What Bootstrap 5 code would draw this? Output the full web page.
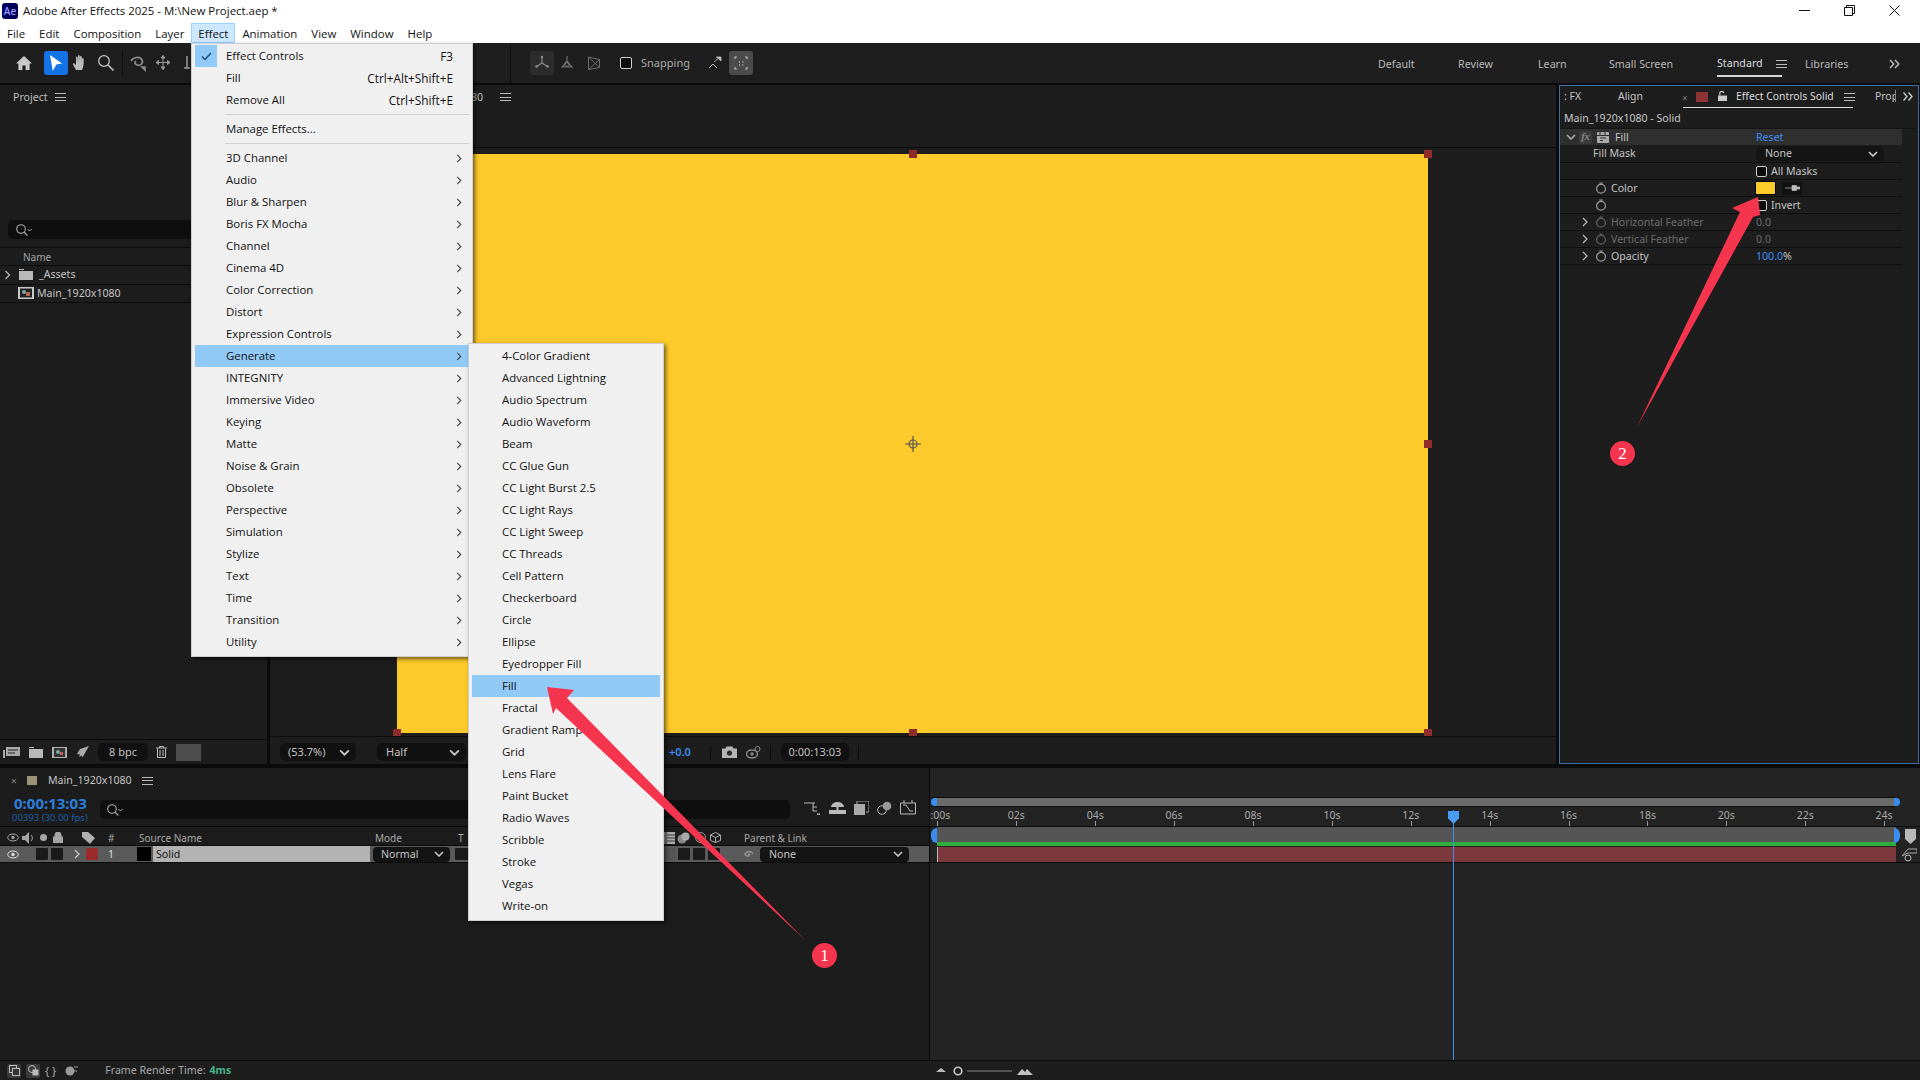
<!DOCTYPE html>
<html lang="en">
<head>
<meta charset="utf-8">
<title>Adobe After Effects 2025</title>
<link href="https://cdn.jsdelivr.net/npm/bootstrap@5.3.0/dist/css/bootstrap.min.css" rel="stylesheet">
<style>
html,body{margin:0;height:100%;overflow:hidden;background:#0b0b0b}
body{font-family:"Noto Sans","Liberation Sans",sans-serif;font-size:10.6px;color:#c4c4c4;line-height:1.2}
.app{width:1920px;height:1080px;position:relative;overflow:hidden}
svg{display:block;flex:none}
.win{font-family:"Open Sans","Liberation Sans",sans-serif;font-size:11.45px;color:#111}
.titlebar{height:43px;background:#fff}
.title-row{height:22px;padding-left:2px;gap:5px}
.ae{width:16px;height:16px;background:#00005b;border-radius:3px;color:#9999ff;font-size:10px;font-weight:600;text-align:center;line-height:16px}
.win-ctl{margin-left:auto;gap:34px;padding-right:20px;margin-top:-2px}
.menu-row{height:21px;padding-left:0}
.menu-row span{padding:0 6px;height:20px;line-height:19px;border:1px solid transparent}
.menu-row .m-open{background:#cce8ff;border-color:#99d1ff}
.toolbar{height:40px;background:#1e1e1e;padding-left:12px}
.tool{width:24px;height:24px;border-radius:3px;display:flex;align-items:center;justify-content:center;color:#bdbdbd;flex:none}
.tool.blue{background:#1473e6;color:#fff;margin-left:8px}
.tool.on{background:#2c2c2c}
.tool.on2{background:#4b4b4b}
.tool.dim{color:#777}
.ws{font-size:10.7px;color:#b9b9b9}
.main{height:679px;margin-top:2px}
.panel{background:#1d1d1d;min-width:0}
.p-project{width:267px}
.p-comp{width:1286px;margin:0 3px}
.p-right{width:360px;margin-left:0;border:1px solid #3f6f9f}
.p-head{height:24px;padding-left:13px;color:#bdbdbd;gap:7px}
.burger{width:11px;height:8px;border-top:1px solid #bbb;border-bottom:1px solid #bbb;position:relative;flex:none}
.burger::after{content:"";position:absolute;left:0;right:0;top:2.5px;height:1px;background:#bbb}
.search{height:19px;background:#0e0e0e;border-radius:5px;padding-left:7px}
.hairline{border-bottom:1px solid #0c0c0c}
.p-row{height:18.5px;padding-left:0}
.pfoot{height:25px;border-top:1px solid #0a0a0a}
.pill{background:#111;border-radius:5px;height:18px;color:#c0c0c0;display:flex;align-items:center;justify-content:space-between}
.viewer{height:590px;border-top:1px solid #0c0c0c;border-bottom:1px solid #0c0c0c;margin-top:62px;position:relative;overflow:hidden}
.comp-yellow{width:1031px;height:579px;background:#fdca2b;margin:6px 0 0 127px;position:relative}
.hd{position:absolute;width:8px;height:8px;background:#8e2b2b;margin:-4px 0 0 -4px}
.rp-tabs{height:23px;position:relative;white-space:nowrap;font-size:10.4px}
.rp-tabs>*{position:absolute}
.rp-row{height:17px;border-bottom:1px solid #0e0e0e;width:342px;position:relative}
.rp-l{width:196px;flex:none;display:flex;align-items:center}
.fx-row{background:#2f2f2f;border-bottom:0;color:#c8c8c8;height:16px}
.rp-tall{height:18px}
.chk{width:10px;height:10px;border:1.5px solid #cfcfcf;border-radius:2px;background:#0c0c0c;flex:none}
.dim-t{color:#6c6c6c}
.link{color:#3f8cf0}
.sw{width:19px;height:12px;background:#fdca2b;outline:1px solid #000}
.tl{height:312px;margin-top:4px;background:#1c1c1c;position:relative}
.tl-left{width:930px;flex:none;border-right:1px solid #0a0a0a;overflow:hidden}
.tl-tab{height:25px;padding-left:11px}
.time-row{height:34px;border-bottom:1px solid #0c0c0c}
.tc{font-size:15px;font-weight:700;color:#2e7fdc;line-height:17px}
.fps{font-size:9.5px;color:#1f5ea8;line-height:12px;margin-left:-2px}
.col-h{height:19px;color:#a8a8a8;font-size:10px;border-bottom:1px solid #0c0c0c;padding-top:3px}
.layer{height:17px;background:#5a5a5a;border-bottom:1px solid #0c0c0c}
.sq{width:12px;height:12px;background:#1a1a1a;border-radius:1px;flex:none}
.lname{width:217px;height:16px;background:#b3b3b3;color:#111;font-size:10.6px;padding-left:3px;line-height:16px;flex:none}
.dark-sel{background:#141414;border-radius:4px;height:15px;color:#c4c4c4;display:flex;align-items:center;justify-content:space-between;padding:0 6px 0 8px;font-size:10.6px;flex:none}
.tl-right{background:#232323;position:relative;padding-top:30px;overflow:hidden;width:990px}
.navbar-t{height:8px;background:#6b6b6b;margin-left:3px;width:961px;outline:1px solid #0c0c0c;position:relative}
.ruler{height:20px;margin-top:1px;margin-left:-32px;color:#aaa;font-size:10.5px;border-bottom:1px solid #0c0c0c;width:1024px}
.rt{width:78.9px;flex:none;text-align:center;position:relative;height:100%;line-height:15px;padding-top:1px}
.rt::after{content:"";position:absolute;left:50%;bottom:0;height:5px;width:1px;background:#999}
.work{height:15px;background:#555;margin-left:7px;width:959px}
.green{height:4px;background:#2fae3e;margin-left:7px;width:959px}
.redl{height:15px;margin-left:7px;margin-top:1px;width:959px;background:#7c393d;border-left:1px solid #bbb}
.grow-line{border-top:1px solid #0c0c0c;height:1px}
.hnd{position:absolute;width:6px;background:#3b8cf0;border-radius:6px 0 0 6px}
.statusbar{height:20px;background:#1d1d1d;border-top:1px solid #0c0c0c;position:absolute;left:0;right:0;bottom:0}
.st-ico{width:14px;height:14px;border-radius:2px}
.st-ico.on{background:#3a3a3a}
.over-menu.dropdown-menu{position:absolute;display:block;margin:0;padding:1px 3px 3px;background:#f0f0f0;border:1px solid #cfcfcf;border-radius:0;box-shadow:2px 2px 4px rgba(0,0,0,.55);min-width:0;font-family:"Open Sans","Liberation Sans",sans-serif;font-size:11.4px;color:#111;z-index:5}
.over-menu .dropdown-item{height:22px;line-height:20px;color:#111;padding:0 16px 1px 31px;display:flex;justify-content:space-between;align-items:center;position:relative;font-size:11.4px;white-space:nowrap}
.m1{left:191px;top:43px;width:282px}
.m2{left:468px;top:343px;width:196px}
.m1 .dropdown-item:hover,.m2 .dropdown-item:hover{background:transparent}
.over-menu .dropdown-item.hi,.over-menu .dropdown-item.hi:hover{background:#91c9f7;color:#111}
.over-menu .chev{position:absolute;right:7px;top:7px}
.kbd-t{font-size:11.8px}
.check-box{position:absolute;left:0;top:0;width:22px;height:22px;background:#91c9f7;display:flex;align-items:center;justify-content:center}
.msep{height:7px;display:flex;align-items:center;padding-left:30px}
.msep i{display:block;height:1px;width:100%;background:#d0d0d0}
.m2 .dropdown-item{padding-left:30px}
.annot{position:absolute;left:0;top:0;z-index:9;pointer-events:none}
.num{position:absolute;width:25px;height:25px;border-radius:50%;background:#f5344d;color:#fff;font-family:"Liberation Serif",serif;font-size:17px;text-align:center;line-height:25px;z-index:10}
.playhead{position:absolute;left:523px;top:42px;width:1px;height:250px;background:#3f8fe8;z-index:3}
.ph-top{position:absolute;left:518px;top:43px;width:11px;height:13px;background:#4a9cf2;clip-path:polygon(0 0,100% 0,100% 55%,50% 100%,0 55%);z-index:3}
</style>
</head>
<body>
<svg width="0" height="0" style="position:absolute">
<defs>
<symbol id="chevd" viewBox="0 0 10 6"><path d="M1 1l4 4 4-4" fill="none" stroke="currentColor" stroke-width="1.6"/></symbol>
<symbol id="chevr" viewBox="0 0 6 10"><path d="M1 1l4 4-4 4" fill="none" stroke="currentColor" stroke-width="1.2"/></symbol>
<symbol id="watch" viewBox="0 0 12 12"><circle cx="6" cy="6.800" r="4.400" fill="none" stroke="currentColor" stroke-width="1.300"/><path d="M4.200 1h3.600M6 1v2" stroke="currentColor" stroke-width="1.100"/></symbol>
<symbol id="mag" viewBox="0 0 18 14"><circle cx="6" cy="6" r="4.300" fill="none" stroke="#aaa" stroke-width="1.100"/><path d="M9 9l3.400 3.600" stroke="#aaa" stroke-width="1.200"/><path d="M12.500 6l2 2 2-2" fill="none" stroke="#aaa"/></symbol>
</defs>
</svg>
<div class="app d-flex flex-column">

<!-- Window title + menu -->
<header class="titlebar win flex-none">
  <div class="title-row d-flex align-items-center">
    <div class="ae">Ae</div><span>Adobe After Effects 2025 - M:\New Project.aep *</span>
    <div class="win-ctl d-flex align-items-center">
      <svg width="11" height="11" viewBox="0 0 11 11"><path d="M0 5.500h11" stroke="#111"/></svg>
      <svg width="11" height="11" viewBox="0 0 11 11"><path d="M.5 2.500h8v8h-8zM2.500 2.500v-2h8v8h-2" fill="none" stroke="#111"/></svg>
      <svg width="11" height="11" viewBox="0 0 11 11"><path d="M.5.500l10 10M10.500.500l-10 10" stroke="#111"/></svg>
    </div>
  </div>
  <div class="menu-row d-flex align-items-center">
    <span>File</span><span>Edit</span><span>Composition</span><span>Layer</span><span class="m-open">Effect</span><span>Animation</span><span>View</span><span>Window</span><span>Help</span>
  </div>
</header>

<!-- Tools bar -->
<div class="toolbar d-flex align-items-center position-relative">
  <div class="tool"><svg width="18" height="18" viewBox="0 0 18 18"><path d="M1 9.500L9 2l8 7.500h-2.400V16h-4v-4.600H7.400V16h-4V9.500z" fill="#c9c9c9"/></svg></div>
  <div class="tool blue"><svg width="16" height="18" viewBox="0 0 16 18"><path d="M3 1l12 8.600-5.600 1L5.800 17z" fill="#fff" transform="translate(-1 0)"/></svg></div>
  <div class="tool"><svg width="17" height="18" viewBox="0 0 17 18"><path d="M4 16c-1-2-3.200-5-3-6.500 1-.8 2 .2 3 1.800V3.500c0-1.300 1.500-1.300 1.600 0L6 8V2c0-1.300 1.700-1.300 1.700 0l.3 6V2.800c0-1.200 1.600-1.200 1.700 0L10 8.500V5c0-1.200 1.600-1.200 1.600 0 .2 3.500.4 7-1.600 11z" fill="#bcbcbc"/></svg></div>
  <div class="tool" style="margin-left:2px"><svg width="18" height="18" viewBox="0 0 18 18"><circle cx="7" cy="7" r="5.300" fill="none" stroke="#c4c4c4" stroke-width="1.300"/><path d="M11 11l5.500 5.500" stroke="#c4c4c4" stroke-width="1.600"/></svg></div>
  <div style="width:1px;height:26px;background:#111;margin:0 3px 0 4px"></div>
  <div class="tool dim"><svg width="18" height="18" viewBox="0 0 18 18"><path d="M2 7c2-4 9-5 11-1s-3 6-5 5-3-2-1-4M13 13l3 0-0 3z" fill="none" stroke="#8a8a8a" stroke-width="1.700"/></svg></div>
  <div class="tool dim" style="margin-left:1px"><svg width="18" height="18" viewBox="0 0 18 18"><path d="M9 1.500v14M2 8.500h14M9 1.500l-2 2.500h4zM9 15.500l-2-2.500h4zM2 8.500l2.500-2v4zM16 8.500l-2.500-2v4z" fill="#9a9a9a" stroke="#9a9a9a"/></svg></div>
  <div class="tool dim"><svg width="16" height="18" viewBox="0 0 16 18"><path d="M8 2v12M5 14h6" stroke="#999" stroke-width="1.500"/></svg></div>

  <div style="width:1px;height:40px;background:#0e0e0e;margin-left:311px"></div>
  <div class="tool on" style="margin-left:19px"><svg width="16" height="16" viewBox="0 0 16 16"><path d="M8 8V2M8 8l-5.500 3.500M8 8l5.500 3.500" stroke="#8e8e8e" stroke-width="1.200"/><circle cx="8" cy="2" r="1.200" fill="#8e8e8e"/><circle cx="2.500" cy="11.500" r="1.300" fill="#8e8e8e"/><circle cx="13.500" cy="11.500" r="1.300" fill="#8e8e8e"/></svg></div>
  <div class="tool dim" style="margin-left:1px"><svg width="16" height="16" viewBox="0 0 16 16"><path d="M8 1v6M8 7l-5 5h10z" fill="none" stroke="#777" stroke-width="1.100"/><circle cx="8" cy="9" r="2.300" fill="none" stroke="#777"/></svg></div>
  <div class="tool dim" style="margin-left:3px"><svg width="14" height="16" viewBox="0 0 14 16"><path d="M1.500 2l11 2.500v8l-11 2zM1.500 2l11 10.500M12.500 4.500l-11 10" fill="none" stroke="#6a6a6a" stroke-width="1"/></svg></div>
  <div class="chk" style="width:12px;height:12px;margin-left:14px"></div>
  <span style="margin-left:9px;color:#aaa;font-size:11px">Snapping</span>
  <div class="tool" style="margin-left:13px"><svg width="14" height="14" viewBox="0 0 14 14"><path d="M1 12l4-4 4 4" fill="none" stroke="#bbb"/><path d="M6 6l6-5M8.500 1H13v4z" fill="#bbb" stroke="#bbb" stroke-width=".8"/></svg></div>
  <div class="tool on2" style="margin-left:2px"><svg width="14" height="14" viewBox="0 0 14 14"><path d="M1 3V1h2M11 1h2v2M13 11v2h-2M3 13H1v-2" fill="none" stroke="#bbb" stroke-width="1.200"/><path d="M5 6h.8M8.500 6h.8M5 9h.8M8.500 9h.8" stroke="#ccc" stroke-width="1.500"/></svg></div>

  <div class="ws position-absolute d-flex align-items-center" style="left:1378px;top:0;height:42px">
    <span style="width:80px">Default</span><span style="width:80px">Review</span><span style="width:71px">Learn</span><span style="width:108px">Small Screen</span>
    <span class="d-flex align-items-start" style="width:65px;height:20px;color:#ddd;border-bottom:2px solid #d5d5d5;gap:13px;margin-top:14px;align-self:flex-start;white-space:nowrap">Standard<span class="burger" style="margin-top:3px"></span></span>
    <span style="margin-left:23px;width:84px">Libraries</span>
    <svg width="11" height="10" viewBox="0 0 11 10"><path d="M1 1l3.800 4L1 9M6 1l3.800 4L6 9" fill="none" stroke="#bbb" stroke-width="1.500"/></svg>
  </div>
</div>

<!-- Panels -->
<div class="main d-flex">
  <section class="panel p-project d-flex flex-column">
    <div class="p-head d-flex align-items-center">Project <span class="burger"></span></div>
    <div style="height:111px"></div>
    <div class="search d-flex align-items-center" style="margin:0 0 8px 8px"><svg width="18" height="14"><use href="#mag"/></svg></div>
    <div class="hairline d-flex align-items-center" style="height:19px;padding-left:23px;font-size:10px;color:#a5a5a5;border-top:1px solid #0c0c0c">Name</div>
    <div class="hairline p-row d-flex align-items-center">
      <svg class="ms-1" width="7" height="10" style="color:#bbb;margin-right:8px"><use href="#chevr"/></svg>
      <svg width="14" height="11" viewBox="0 0 14 11"><path d="M0 2h14v9H0zM0 0h5v1H0z" fill="#b9b9b9"/></svg>
      <span style="margin-left:6px">_Assets</span>
    </div>
    <div class="hairline p-row d-flex align-items-center" style="padding-left:18px">
      <svg width="16" height="12" viewBox="0 0 16 12"><rect width="16" height="12" fill="#c8c8c8"/><rect x="2" y="1.500" width="12" height="9" fill="#222"/><circle cx="6" cy="5" r="2" fill="#7aa"/><rect x="8" y="5" width="4" height="4" fill="#b65"/></svg>
      <span style="margin-left:3px">Main_1920x1080</span>
    </div>
    <div class="flex-grow-1"></div>
    <div class="pfoot d-flex align-items-center" style="padding-left:3px">
      <svg width="17" height="12" viewBox="0 0 17 12"><path d="M0 4h2v8H0zM3 1h14v9H3z" fill="#aaa"/><path d="M5 4h10M5 7h7" stroke="#222"/></svg>
      <svg width="14" height="11" viewBox="0 0 14 11" style="margin-left:9px"><path d="M0 2h14v9H0zM0 0h5v1H0z" fill="#b9b9b9"/></svg>
      <svg width="15" height="11" viewBox="0 0 15 11" style="margin-left:9px"><rect width="15" height="11" fill="#b0b0b0"/><rect x="2" y="1" width="11" height="9" fill="#333"/><circle cx="6" cy="5" r="2" fill="#7aa"/><rect x="8" y="5" width="3" height="3" fill="#b65"/></svg>
      <svg width="13" height="12" viewBox="0 0 13 12" style="margin-left:9px"><path d="M13 0L4 3 1 8l3 .5L3 11 6 9.500l.5 2z" fill="#aaa"/></svg>
      <div class="pill justify-content-center" style="width:50px;margin-left:9px;font-size:11px">8 bpc</div>
      <svg width="11" height="12" viewBox="0 0 11 12" style="margin-left:8px"><path d="M0 2h11M3.500 2V.5h4V2M1.500 2.500v9h8v-9M4 4v6M7 4v6" fill="none" stroke="#bbb"/></svg>
      <div style="width:25px;height:17px;background:#4d4d4d;margin-left:9px"></div>
    </div>
  </section>

  <section class="panel p-comp d-flex flex-column">
    <div class="d-flex align-items-center" style="height:24px;margin-left:201px;gap:17px;color:#bdbdbd;margin-bottom:-24px;z-index:1">80 <span class="burger"></span></div>
    <div class="viewer">
      <div class="comp-yellow">
        <span class="hd" style="left:0;top:0"></span><span class="hd" style="left:516px;top:0"></span><span class="hd" style="left:1031px;top:0"></span>
        <span class="hd" style="left:1031px;top:290px"></span>
        <span class="hd" style="left:0;top:579px"></span><span class="hd" style="left:516px;top:579px"></span><span class="hd" style="left:1031px;top:579px"></span>
        <svg class="position-absolute" style="left:508px;top:282px" width="16" height="16" viewBox="0 0 16 16"><circle cx="8" cy="8" r="4" fill="none" stroke="#555" stroke-width="1.200"/><path d="M8 0v16M0 8h16" stroke="#555" stroke-width="1.200"/></svg>
      </div>
    </div>
    <div class="flex-grow-1 d-flex align-items-center position-relative" style="padding:3px 0 0 10px">
      <div class="pill" style="width:76px;padding:0 6px 0 8px;font-size:11px">(53.7%)<svg width="11" height="7" style="color:#ccc"><use href="#chevd"/></svg></div>
      <div class="pill" style="width:89px;margin-left:21px;padding:0 6px 0 9px;font-size:11px">Half<svg width="11" height="7" style="color:#ccc"><use href="#chevd"/></svg></div>
      <span class="link" style="margin-left:203px;font-weight:600;font-size:11px">+0.0</span>
      <div style="width:1px;height:15px;background:#0c0c0c;margin-left:19px"></div>
      <svg width="15" height="12" viewBox="0 0 15 12" style="margin-left:11px"><path d="M0 2.500h3.500l1-2h6l1 2H15V12H0z" fill="#b5b5b5"/><circle cx="7.500" cy="7" r="2.600" fill="#2a2a2a"/></svg>
      <svg width="15" height="13" viewBox="0 0 15 13" style="margin-left:9px"><ellipse cx="6" cy="8" rx="5.500" ry="4" fill="none" stroke="#8a8a8a" stroke-width="1.500"/><circle cx="6" cy="8" r="1.700" fill="#8a8a8a"/><circle cx="11.500" cy="3" r="2.500" fill="none" stroke="#8a8a8a"/></svg>
      <div style="width:1px;height:15px;background:#0c0c0c;margin-left:9px"></div>
      <div class="pill justify-content-center" style="width:68px;margin-left:10px;font-size:11px">0:00:13:03</div>
      <div style="width:1px;height:15px;background:#0c0c0c;margin-left:9px"></div>
    </div>
  </section>

  <section class="panel p-right">
    <div class="rp-tabs">
      <span style="left:4px;top:4px">: FX</span>
      <span style="left:58px;top:4px">Align</span>
      <span style="left:122px;top:6px;color:#777;font-size:10px">×</span>
      <span style="left:136px;top:6px;width:12px;height:10px;background:#8e3434"></span>
      <svg style="left:158px;top:5px" width="9" height="10" viewBox="0 0 9 10"><path d="M0 4.500h9V10H0z" fill="#ccc"/><path d="M1.800 4.500V2.300a2 2 0 0 1 4 0" fill="none" stroke="#ccc" stroke-width="1.200"/></svg>
      <span style="left:176px;top:4px;color:#ddd">Effect Controls Solid</span>
      <span class="burger" style="left:284px;top:7px"></span>
      <span style="left:123px;top:21px;width:170px;height:1px;background:#ddd"></span>
      <span style="left:315px;top:4px;width:21px;overflow:hidden;border-right:1px solid #888">Prop</span>
      <svg style="left:343px;top:6px" width="10" height="9" viewBox="0 0 10 9"><path d="M.5.500l3.500 4-3.500 4M5.500.500l3.500 4-3.500 4" fill="none" stroke="#ccc" stroke-width="1.400"/></svg>
    </div>
    <div class="rp-row d-flex align-items-center" style="height:20px;padding-left:4px;border-bottom:1px solid #151515;color:#c8c8c8;width:100%">Main_1920x1080 - Solid</div>
    <div class="rp-row fx-row d-flex align-items-center">
      <div class="rp-l">
        <svg width="10" height="6" style="margin-left:6px;color:#aaa"><use href="#chevd"/></svg>
        <span class="d-inline-block" style="margin-left:3px;background:#3b3b3b;width:13px;height:13px;border-radius:2px;color:#888;font:italic 700 10.500px 'Liberation Serif',serif;text-align:center;line-height:12px">fx</span>
        <svg width="12" height="11" viewBox="0 0 12 11" style="margin-left:5px"><rect width="12" height="11" rx="1" fill="#aaa"/><path d="M0 3.500h12M3 0v3M8 0v3" stroke="#2f2f2f"/><path d="M3 6h6M3 8.500h3" stroke="#2f2f2f"/></svg>
        <span style="margin-left:6px">Fill</span>
      </div>
      <span class="link">Reset</span>
    </div>
    <div class="rp-row rp-tall d-flex align-items-center">
      <div class="rp-l" style="padding-left:33px">Fill Mask</div>
      <div class="dark-sel" style="width:128px;padding:0 6px 0 9px">None<svg width="10" height="6" style="color:#ccc"><use href="#chevd"/></svg></div>
    </div>
    <div class="rp-row d-flex align-items-center">
      <div class="rp-l"></div><span class="chk" style="width:11px;height:11px"></span><span style="margin-left:4px">All Masks</span>
    </div>
    <div class="rp-row d-flex align-items-center">
      <div class="rp-l" style="padding-left:35px;color:#c4c4c4"><svg width="12" height="12" style="margin-right:4px;color:#999"><use href="#watch"/></svg>Color</div>
      <span class="sw"></span>
      <div class="d-flex align-items-center justify-content-center" style="width:20px;height:13px;background:#111;margin-left:7px"><svg width="15" height="6" viewBox="0 0 15 6"><path d="M0 3h7M7 .5h4.500v5H7zM11 2h4v2h-4z" stroke="#bbb" fill="#bbb" stroke-width=".7"/></svg></div>
    </div>
    <div class="rp-row d-flex align-items-center">
      <div class="rp-l" style="padding-left:35px"><svg width="12" height="12" style="color:#999"><use href="#watch"/></svg></div>
      <span class="chk" style="width:11px;height:11px"></span><span style="margin-left:4px">Invert</span>
    </div>
    <div class="rp-row d-flex align-items-center dim-t">
      <div class="rp-l" style="padding-left:22px"><svg width="6" height="10" style="color:#bbb;margin-right:7px"><use href="#chevr"/></svg><svg width="12" height="12" style="margin-right:4px;color:#5f5f5f"><use href="#watch"/></svg>Horizontal Feather</div>
      <span>0.0</span>
    </div>
    <div class="rp-row d-flex align-items-center dim-t">
      <div class="rp-l" style="padding-left:22px"><svg width="6" height="10" style="color:#bbb;margin-right:7px"><use href="#chevr"/></svg><svg width="12" height="12" style="margin-right:4px;color:#5f5f5f"><use href="#watch"/></svg>Vertical Feather</div>
      <span>0.0</span>
    </div>
    <div class="rp-row d-flex align-items-center">
      <div class="rp-l" style="padding-left:22px"><svg width="6" height="10" style="color:#bbb;margin-right:7px"><use href="#chevr"/></svg><svg width="12" height="12" style="margin-right:4px;color:#999"><use href="#watch"/></svg>Opacity</div>
      <span><span class="link">100.0</span>%</span>
    </div>
  </section>
</div>

<!-- Timeline -->
<section class="tl d-flex">
  <div class="tl-left d-flex flex-column">
    <div class="tl-tab d-flex align-items-center" style="color:#c4c4c4">
      <span style="color:#888;font-size:10px;width:16px">×</span>
      <span style="width:10px;height:9px;background:#9d9476;margin-right:11px"></span>
      <span style="margin-right:10px">Main_1920x1080</span><span class="burger"></span>
    </div>
    <div class="time-row d-flex align-items-start">
      <div style="width:100px;padding-left:14px;margin-top:2px"><div class="tc">0:00:13:03</div><div class="fps">00393 (30.00 fps)</div></div>
      <div class="search d-flex align-items-center" style="width:690px;margin-top:7px;padding-left:6px;flex:none"><svg width="18" height="14"><use href="#mag"/></svg></div>
      <div class="d-flex align-items-center" style="margin-top:7px;margin-left:14px;gap:8px;color:#bbb">
        <svg width="17" height="14" viewBox="0 0 17 14"><path d="M0 2h5M5 2h6M9 2v8h4M9 6h4M13 13h3l-1.500 1z" stroke="#bbb" fill="none"/></svg>
        <svg width="17" height="14" viewBox="0 0 17 14"><path d="M2 6a6.500 5 0 0 1 13 0zM7.500 6h2v3h-2zM0 9h17v4H0z" fill="#bbb"/></svg>
        <svg width="15" height="14" viewBox="0 0 15 14"><path d="M0 3h11v11H0z" fill="#aaa"/><path d="M3 3V0h12v11h-3" fill="none" stroke="#aaa"/></svg>
        <svg width="15" height="14" viewBox="0 0 15 14"><circle cx="5" cy="9" r="4.300" fill="none" stroke="#bbb"/><circle cx="10" cy="5" r="4.300" fill="#999"/></svg>
        <svg width="16" height="15" viewBox="0 0 16 15"><path d="M.5 3h15v11H.5zM4 0v3M12 0v3M3 5h3l4 6h3" fill="none" stroke="#bbb"/></svg>
      </div>
    </div>
    <div class="col-h d-flex align-items-center">
      <svg width="12" height="9" viewBox="0 0 12 9" style="margin-left:7px"><ellipse cx="6" cy="4.500" rx="5.300" ry="3.500" fill="none" stroke="#a5a5a5"/><circle cx="6" cy="4.500" r="1.700" fill="#a5a5a5"/></svg>
      <svg width="12" height="12" viewBox="0 0 12 12" style="margin-left:3px"><path d="M0 4h3l4-4v12L3 8H0z" fill="#a5a5a5"/><path d="M9 3a4 4 0 0 1 0 6" fill="none" stroke="#a5a5a5"/></svg>
      <span style="width:7px;height:7px;border-radius:50%;background:#a5a5a5;margin-left:6px;flex:none"></span>
      <svg width="10" height="11" viewBox="0 0 10 11" style="margin-left:6px"><path d="M0 5h10v6H0zM2 5V3a3 3 0 0 1 6 0v2" fill="#a5a5a5" stroke="#a5a5a5"/></svg>
      <svg width="13" height="12" viewBox="0 0 13 12" style="margin-left:19px"><path d="M0 0h6l7 6-5 6-8-7z" fill="#b0b0b0"/></svg>
      <span style="margin-left:13px;width:31px">#</span>
      <span style="width:236px;flex:none">Source Name</span>
      <span style="width:83px;flex:none">Mode</span>
      <span style="width:206px;flex:none">T</span>
      <svg width="11" height="12" viewBox="0 0 11 12"><rect width="11" height="12" fill="#aaa"/><path d="M2 0v12M3 3h8M3 6h8M3 9h8" stroke="#222" stroke-width=".8"/></svg>
      <svg width="13" height="12" viewBox="0 0 13 12" style="margin-left:2px"><circle cx="5" cy="7" r="4.500" fill="#888"/><circle cx="8.500" cy="4.500" r="4" fill="#aaa"/></svg>
      <svg width="11" height="11" viewBox="0 0 11 11" style="margin-left:5px"><circle cx="5.500" cy="5.500" r="5" fill="none" stroke="#999"/><circle cx="5.500" cy="5.500" r="2" fill="#999"/></svg>
      <svg width="11" height="11" viewBox="0 0 11 11" style="margin-left:4px"><path d="M5.500.5l5 2.500v5.500l-5 2-5-2V3zM.5 3l5 2.500L10.500 3M5.500 5.500v5" fill="none" stroke="#aaa"/></svg>
      <span style="margin-left:23px">Parent &amp; Link</span>
    </div>
    <div class="layer d-flex align-items-center">
      <svg width="12" height="9" viewBox="0 0 12 9" style="margin-left:7px"><ellipse cx="6" cy="4.500" rx="5.300" ry="3.500" fill="none" stroke="#ddd"/><circle cx="6" cy="4.500" r="1.700" fill="#ddd"/></svg>
      <span class="sq" style="margin-left:17px"></span><span class="sq" style="margin-left:3px"></span>
      <svg width="6" height="10" style="margin-left:11px;color:#ccc"><use href="#chevr"/></svg>
      <span style="width:12px;height:12px;background:#9a2a2a;border-radius:2px;margin-left:6px;flex:none"></span>
      <span style="color:#ddd;margin-left:10px;width:27px;flex:none">1</span>
      <span style="width:14px;height:14px;background:#000;margin-left:2px;flex:none"></span>
      <span class="lname" style="margin-left:2px">Solid</span>
      <div class="dark-sel" style="width:77px;margin-left:3px">Normal<svg width="10" height="6"><use href="#chevd"/></svg></div>
      <span class="sq" style="margin-left:5px;width:203px"></span>
      <span class="sq" style="margin-left:5px;background:#555"></span>
      <span class="sq" style="margin-left:3px"></span><span class="sq" style="margin-left:3px"></span><span class="sq" style="margin-left:3px"></span>
      <svg width="12" height="12" viewBox="0 0 12 12" style="margin-left:22px"><path d="M6 6a1.500 1.500 0 0 1 1.500 1.500A3 3 0 0 1 3 6a4.500 4.500 0 0 1 8 0" fill="none" stroke="#999" stroke-width="1.400"/></svg>
      <div class="dark-sel" style="width:149px;margin-left:6px;padding-left:9px">None<svg width="10" height="6"><use href="#chevd"/></svg></div>
    </div>
    <div class="flex-grow-1"></div>
  </div>
  <div class="tl-right">
    <div class="navbar-t"></div>
    <div class="ruler d-flex">
      <div class="rt">0:00s</div><div class="rt">02s</div><div class="rt">04s</div><div class="rt">06s</div><div class="rt">08s</div><div class="rt">10s</div><div class="rt">12s</div><div class="rt">14s</div><div class="rt">16s</div><div class="rt">18s</div><div class="rt">20s</div><div class="rt">22s</div><div class="rt">24s</div>
    </div>
    <div class="work"></div>
    <div class="green"></div>
    <div class="redl"></div>
    <div class="grow-line"></div>
    <span class="hnd" style="left:1px;top:30px;height:8px"></span>
    <span class="hnd" style="left:964px;top:30px;height:8px;border-radius:0 6px 6px 0"></span>
    <span class="hnd" style="left:1px;top:60px;height:15px"></span>
    <span class="hnd" style="left:964px;top:60px;height:15px;border-radius:0 6px 6px 0"></span>
    <svg class="position-absolute" style="left:975px;top:61px" width="11" height="15" viewBox="0 0 11 15"><path d="M0 0h11v10l-5.500 5L0 10z" fill="#b9b9b9"/></svg>
    <svg class="position-absolute" style="left:972px;top:80px" width="15" height="14" viewBox="0 0 15 14"><path d="M0 8L6 1h9v4H6z" fill="none" stroke="#aaa"/><circle cx="6" cy="10" r="3" fill="none" stroke="#bbb"/></svg>
    <span class="playhead"></span><span class="ph-top"></span>
  </div>
  <div class="statusbar d-flex align-items-center" style="z-index:2">
    <span class="st-ico on d-flex align-items-center justify-content-center" style="margin-left:7px"><svg width="11" height="11" viewBox="0 0 11 11"><rect x=".5" y=".5" width="7" height="7" fill="none" stroke="#bbb"/><rect x="3.500" y="3.500" width="7" height="7" fill="#333" stroke="#bbb"/></svg></span>
    <span class="st-ico on d-flex align-items-center justify-content-center" style="margin-left:5px"><svg width="11" height="11" viewBox="0 0 11 11"><circle cx="4" cy="4" r="3.500" fill="none" stroke="#bbb"/><rect x="4.500" y="4.500" width="6" height="6" fill="#bbb"/></svg></span>
    <span style="margin-left:5px;font-size:11px;color:#aaa">{ }</span>
    <svg width="13" height="10" viewBox="0 0 13 10" style="margin-left:9px"><circle cx="5" cy="5" r="4.500" fill="#9a9a9a"/><path d="M9 1h4M9 5h3" stroke="#9a9a9a"/></svg>
    <span style="margin-left:27px;color:#aaa">Frame Render Time:</span><span style="margin-left:4px;color:#46b58a;font-weight:700">4ms</span>
    <svg class="position-absolute" style="left:935px;top:4px" width="100" height="12" viewBox="0 0 100 12"><path d="M1 7l5-4 5 4z" fill="#bbb"/><circle cx="23" cy="6" r="3.800" fill="none" stroke="#ccc" stroke-width="1.600"/><path d="M32 6h45" stroke="#666" stroke-width="1.500"/><path d="M82 10l5-6 3 3 2-3 6 6z" fill="#c4c4c4"/></svg>
  </div>
</section>

<!-- Open Effect menu -->
<div class="dropdown-menu over-menu m1">
  <div class="dropdown-item"><span class="check-box"><svg width="11" height="9" viewBox="0 0 11 9"><path d="M1 4.500l3 3 6-6.500" fill="none" stroke="#1f4f7a" stroke-width="1.500"/></svg></span><span>Effect Controls</span><span class="kbd-t">F3</span></div>
  <div class="dropdown-item"><span>Fill</span><span class="kbd-t">Ctrl+Alt+Shift+E</span></div>
  <div class="dropdown-item"><span>Remove All</span><span class="kbd-t">Ctrl+Shift+E</span></div>
  <div class="msep"><i></i></div>
  <div class="dropdown-item">Manage Effects...</div>
  <div class="msep"><i></i></div>
  <div class="dropdown-item">3D Channel<svg class="chev" width="6" height="9" style="color:#444"><use href="#chevr"/></svg></div>
  <div class="dropdown-item">Audio<svg class="chev" width="6" height="9" style="color:#444"><use href="#chevr"/></svg></div>
  <div class="dropdown-item">Blur &amp; Sharpen<svg class="chev" width="6" height="9" style="color:#444"><use href="#chevr"/></svg></div>
  <div class="dropdown-item">Boris FX Mocha<svg class="chev" width="6" height="9" style="color:#444"><use href="#chevr"/></svg></div>
  <div class="dropdown-item">Channel<svg class="chev" width="6" height="9" style="color:#444"><use href="#chevr"/></svg></div>
  <div class="dropdown-item">Cinema 4D<svg class="chev" width="6" height="9" style="color:#444"><use href="#chevr"/></svg></div>
  <div class="dropdown-item">Color Correction<svg class="chev" width="6" height="9" style="color:#444"><use href="#chevr"/></svg></div>
  <div class="dropdown-item">Distort<svg class="chev" width="6" height="9" style="color:#444"><use href="#chevr"/></svg></div>
  <div class="dropdown-item">Expression Controls<svg class="chev" width="6" height="9" style="color:#444"><use href="#chevr"/></svg></div>
  <div class="dropdown-item hi">Generate<svg class="chev" width="6" height="9" style="color:#444"><use href="#chevr"/></svg></div>
  <div class="dropdown-item">INTEGNITY<svg class="chev" width="6" height="9" style="color:#444"><use href="#chevr"/></svg></div>
  <div class="dropdown-item">Immersive Video<svg class="chev" width="6" height="9" style="color:#444"><use href="#chevr"/></svg></div>
  <div class="dropdown-item">Keying<svg class="chev" width="6" height="9" style="color:#444"><use href="#chevr"/></svg></div>
  <div class="dropdown-item">Matte<svg class="chev" width="6" height="9" style="color:#444"><use href="#chevr"/></svg></div>
  <div class="dropdown-item">Noise &amp; Grain<svg class="chev" width="6" height="9" style="color:#444"><use href="#chevr"/></svg></div>
  <div class="dropdown-item">Obsolete<svg class="chev" width="6" height="9" style="color:#444"><use href="#chevr"/></svg></div>
  <div class="dropdown-item">Perspective<svg class="chev" width="6" height="9" style="color:#444"><use href="#chevr"/></svg></div>
  <div class="dropdown-item">Simulation<svg class="chev" width="6" height="9" style="color:#444"><use href="#chevr"/></svg></div>
  <div class="dropdown-item">Stylize<svg class="chev" width="6" height="9" style="color:#444"><use href="#chevr"/></svg></div>
  <div class="dropdown-item">Text<svg class="chev" width="6" height="9" style="color:#444"><use href="#chevr"/></svg></div>
  <div class="dropdown-item">Time<svg class="chev" width="6" height="9" style="color:#444"><use href="#chevr"/></svg></div>
  <div class="dropdown-item">Transition<svg class="chev" width="6" height="9" style="color:#444"><use href="#chevr"/></svg></div>
  <div class="dropdown-item">Utility<svg class="chev" width="6" height="9" style="color:#444"><use href="#chevr"/></svg></div>
</div>

<!-- Generate submenu -->
<div class="dropdown-menu over-menu m2">
  <div class="dropdown-item">4-Color Gradient</div>
  <div class="dropdown-item">Advanced Lightning</div>
  <div class="dropdown-item">Audio Spectrum</div>
  <div class="dropdown-item">Audio Waveform</div>
  <div class="dropdown-item">Beam</div>
  <div class="dropdown-item">CC Glue Gun</div>
  <div class="dropdown-item">CC Light Burst 2.5</div>
  <div class="dropdown-item">CC Light Rays</div>
  <div class="dropdown-item">CC Light Sweep</div>
  <div class="dropdown-item">CC Threads</div>
  <div class="dropdown-item">Cell Pattern</div>
  <div class="dropdown-item">Checkerboard</div>
  <div class="dropdown-item">Circle</div>
  <div class="dropdown-item">Ellipse</div>
  <div class="dropdown-item">Eyedropper Fill</div>
  <div class="dropdown-item hi">Fill</div>
  <div class="dropdown-item">Fractal</div>
  <div class="dropdown-item">Gradient Ramp</div>
  <div class="dropdown-item">Grid</div>
  <div class="dropdown-item">Lens Flare</div>
  <div class="dropdown-item">Paint Bucket</div>
  <div class="dropdown-item">Radio Waves</div>
  <div class="dropdown-item">Scribble</div>
  <div class="dropdown-item">Stroke</div>
  <div class="dropdown-item">Vegas</div>
  <div class="dropdown-item">Write-on</div>
</div>

<!-- Tutorial annotations -->
<svg class="annot" width="1920" height="1080" viewBox="0 0 1920 1080">
  <path d="M547 687L574 690 567 698 805 940 556 708 553 714Z" fill="#f5344d"/>
  <path d="M1758 197L1732 208 1740 212 1637 427 1753 217 1760 215Z" fill="#f5344d"/>
</svg>
<div class="num" style="left:812px;top:943px">1</div>
<div class="num" style="left:1610px;top:441px">2</div>
</div>
</body>
</html>
